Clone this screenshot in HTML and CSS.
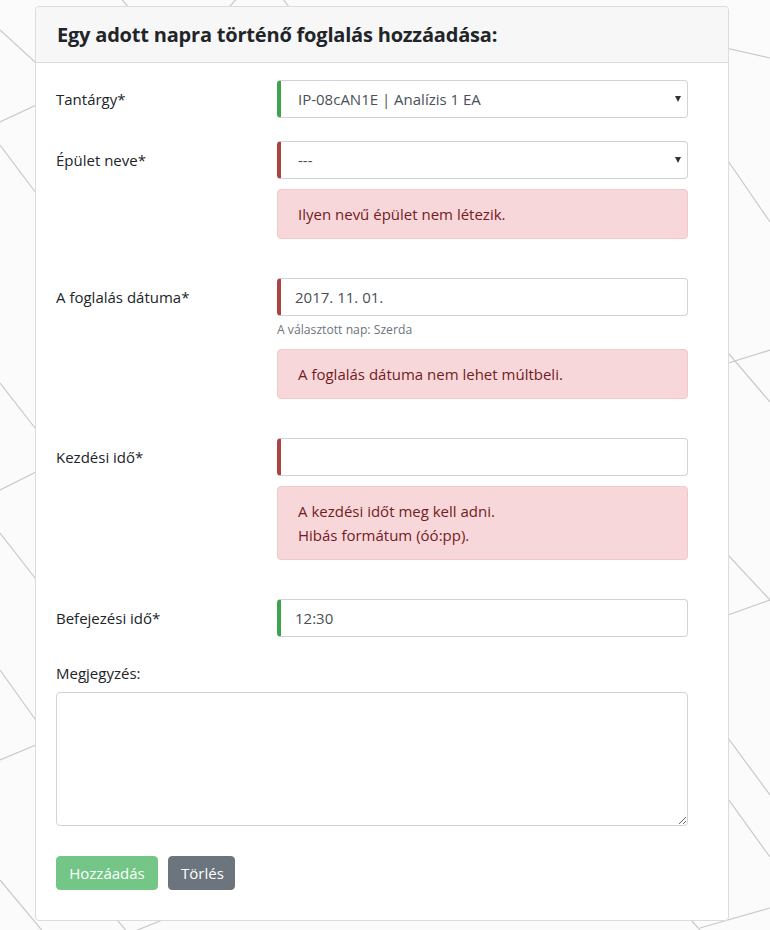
FILE: index.html
```html
<!DOCTYPE html>
<html lang="hu">
<head>
<meta charset="utf-8">
<title>Foglalás hozzáadása</title>
<link rel="stylesheet" href="styles.css">
</head>
<body>
<svg class="bg-lines" width="770" height="930" viewBox="0 0 770 930" aria-hidden="true">
  <g stroke="#c9c9cc" stroke-width="1.2" fill="none">
    <line x1="0" y1="30" x2="120" y2="140"/>
    <line x1="0" y1="122" x2="90" y2="80"/>
    <line x1="0" y1="145" x2="60" y2="225"/>
    <line x1="0" y1="383" x2="60" y2="460"/>
    <line x1="0" y1="490" x2="80" y2="450"/>
    <line x1="0" y1="533" x2="60" y2="610"/>
    <line x1="0" y1="670" x2="50" y2="740"/>
    <line x1="0" y1="760" x2="60" y2="735"/>
    <line x1="0" y1="880" x2="50" y2="940"/>
    <line x1="100" y1="900" x2="130" y2="935"/>
    <line x1="125" y1="935" x2="200" y2="905"/>
    <line x1="118" y1="-5" x2="135" y2="15"/>
    <line x1="222" y1="15" x2="240" y2="-5"/>
    <line x1="280" y1="-5" x2="295" y2="15"/>
    <line x1="690" y1="40" x2="770" y2="58"/>
    <line x1="700" y1="120" x2="770" y2="222"/>
    <line x1="690" y1="375" x2="770" y2="350"/>
    <line x1="700" y1="320" x2="770" y2="402"/>
    <line x1="700" y1="525" x2="770" y2="600"/>
    <line x1="700" y1="625" x2="770" y2="600"/>
    <line x1="700" y1="700" x2="770" y2="795"/>
    <line x1="700" y1="760" x2="770" y2="857"/>
    <line x1="690" y1="919" x2="700" y2="930"/>
    <line x1="700" y1="928" x2="770" y2="908"/>
  </g>
</svg>
<main class="card">
  <header class="card-header">
    <h1 class="card-title">Egy adott napra történő foglalás hozzáadása:</h1>
  </header>
  <form class="card-body">
    <div class="form-group">
      <label class="col-label" for="subject">Tantárgy*</label>
      <div class="field">
        <div class="select-wrap">
          <select id="subject" class="control control-select is-valid">
            <option>IP-08cAN1E | Analízis 1 EA</option>
          </select>
        </div>
      </div>
    </div>

    <div class="form-group">
      <label class="col-label" for="building">Épület neve*</label>
      <div class="field">
        <div class="select-wrap">
          <select id="building" class="control control-select is-invalid">
            <option>---</option>
          </select>
        </div>
        <div class="alert">Ilyen nevű épület nem létezik.</div>
      </div>
    </div>

    <div class="form-group">
      <label class="col-label" for="date">A foglalás dátuma*</label>
      <div class="field">
        <input id="date" class="control is-invalid" type="text" value="2017. 11. 01.">
        <small class="help-text">A választott nap: Szerda</small>
        <div class="alert">A foglalás dátuma nem lehet múltbeli.</div>
      </div>
    </div>

    <div class="form-group">
      <label class="col-label" for="start">Kezdési idő*</label>
      <div class="field">
        <input id="start" class="control is-invalid" type="text" value="">
        <div class="alert">A kezdési időt meg kell adni.<br>Hibás formátum (óó:pp).</div>
      </div>
    </div>

    <div class="form-group">
      <label class="col-label" for="end">Befejezési idő*</label>
      <div class="field">
        <input id="end" class="control is-valid" type="text" value="12:30">
      </div>
    </div>

    <div class="form-block">
      <label class="block-label" for="note">Megjegyzés:</label>
      <textarea id="note" class="textarea"></textarea>
    </div>

    <div class="actions">
      <button type="button" class="btn btn-success" disabled>Hozzáadás</button>
      <button type="button" class="btn btn-secondary">Törlés</button>
    </div>
  </form>
</main>
</body>
</html>
```

FILE: styles.css
```css
* { box-sizing: border-box; }

html, body {
  margin: 0;
  padding: 0;
}

body {
  position: relative;
  width: 770px;
  min-height: 930px;
  background: #fbfbfb;
  font-family: "Open Sans", "Noto Sans", "DejaVu Sans", sans-serif;
  font-size: 15px;
  line-height: 24px;
  color: #212529;
  padding-top: 6px;
  padding-bottom: 10px;
}

.bg-lines {
  position: absolute;
  left: 0;
  top: 0;
  z-index: 0;
}

.card {
  position: relative;
  z-index: 1;
  margin-left: 35px;
  width: 694px;
  background: #fff;
  border: 1px solid #dcdcdc;
  border-radius: 4px;
}

.card-header {
  background: #f7f7f7;
  border-bottom: 1px solid #dcdcdc;
  border-radius: 4px 4px 0 0;
  padding: 13px 21px 12px;
}

.card-title {
  margin: 0;
  font-size: 20px;
  line-height: 30px;
  font-weight: 700;
  letter-spacing: -0.2px;
  color: #212529;
}

.card-body {
  display: block;
  margin: 0;
  padding: 17px 40px 30px 20px;
}

.form-group {
  display: grid;
  grid-template-columns: 221px 411px;
  margin-bottom: 23px;
}

.col-label {
  padding-top: 7px;
  line-height: 24px;
}

.field {
  display: flex;
  flex-direction: column;
}

.select-wrap {
  position: relative;
}

.select-wrap::after {
  content: "";
  position: absolute;
  right: 7px;
  top: 16px;
  border-left: 3.5px solid transparent;
  border-right: 3.5px solid transparent;
  border-top: 6px solid #333;
  pointer-events: none;
}

.control {
  display: block;
  width: 100%;
  height: 38px;
  margin: 0;
  padding: 6px 12px 6px 14px;
  font-family: inherit;
  font-size: 15px;
  line-height: 24px;
  color: #495057;
  background: #fff;
  border: 1px solid #ced4da;
  border-left-width: 4px;
  border-radius: 4px;
  outline: none;
}

.control-select {
  appearance: none;
  -webkit-appearance: none;
  padding-left: 17px;
}

.is-valid { border-left-color: #3fa34d; }
.is-invalid { border-left-color: #a94442; }

.help-text {
  margin-top: 4px;
  font-size: 12.2px;
  line-height: 19px;
  color: #6c757d;
}

.alert {
  margin-top: 10px;
  margin-bottom: 16px;
  padding: 12px 20px;
  background: #f8d7da;
  border: 1px solid #f5c6cb;
  border-radius: 4px;
  color: #721c24;
  line-height: 24px;
}

.form-block {
  display: flex;
  flex-direction: column;
  width: 632px;
  padding-top: 1px;
}

.block-label {
  line-height: 24px;
  margin-bottom: 7px;
}

.textarea {
  display: block;
  width: 632px;
  height: 134px;
  margin: 0;
  padding: 6px 12px;
  font-family: inherit;
  font-size: 15px;
  border: 1px solid #ced4da;
  border-radius: 4px;
  resize: vertical;
  outline: none;
}

.actions {
  display: flex;
  gap: 10px;
  margin-top: 30px;
}

.btn {
  height: 34px;
  padding: 5px 12px;
  font-family: inherit;
  font-size: 15px;
  line-height: 22px;
  color: #fff;
  border: 1px solid transparent;
  border-radius: 4px;
}

.btn-success {
  background: #74c687;
  border-color: #74c687;
  width: 102px;
}

.btn-secondary {
  background: #6c757d;
  border-color: #6c757d;
  width: 67px;
}
```
